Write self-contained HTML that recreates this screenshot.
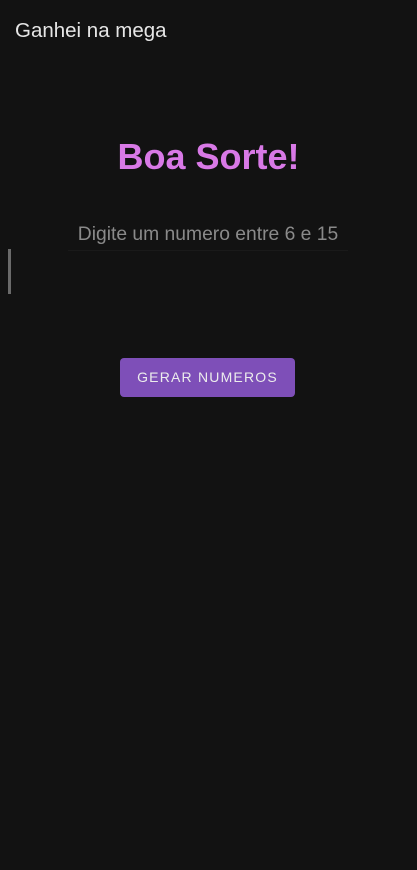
<!DOCTYPE html>
<html><head><style>
body{margin:0;width:417px;height:870px;background:#121212;font-family:"Liberation Sans",sans-serif;position:relative;overflow:hidden}
.t{position:absolute;left:15px;top:19px;font-size:20.5px;color:#e6e6e6}
.h{position:absolute;left:0;width:417px;top:136px;text-align:center;font-size:36px;font-weight:bold;color:#d879e6;padding-left:-2px}
.i{position:absolute;left:40px;width:336px;top:224px;text-align:center;font-size:19.3px;color:#8a8a8a}
.u{position:absolute;left:68px;width:280px;top:250px;height:1px;background:#1a1a1a}
.c{position:absolute;left:8px;top:249px;width:3px;height:45px;background:#6a6a6a}
.b{position:absolute;left:120px;top:358px;width:175px;height:39px;background:#7e4fb8;border-radius:4px;color:#ececec;font-size:14px;letter-spacing:1.2px;text-align:center;line-height:39px}
</style></head><body>
<div class="t">Ganhei na mega</div>
<div class="h">Boa Sorte!</div>
<div class="i">Digite um numero entre 6 e 15</div>
<div class="u"></div>
<div class="c"></div>
<div class="b">GERAR NUMEROS</div>
</body></html>
